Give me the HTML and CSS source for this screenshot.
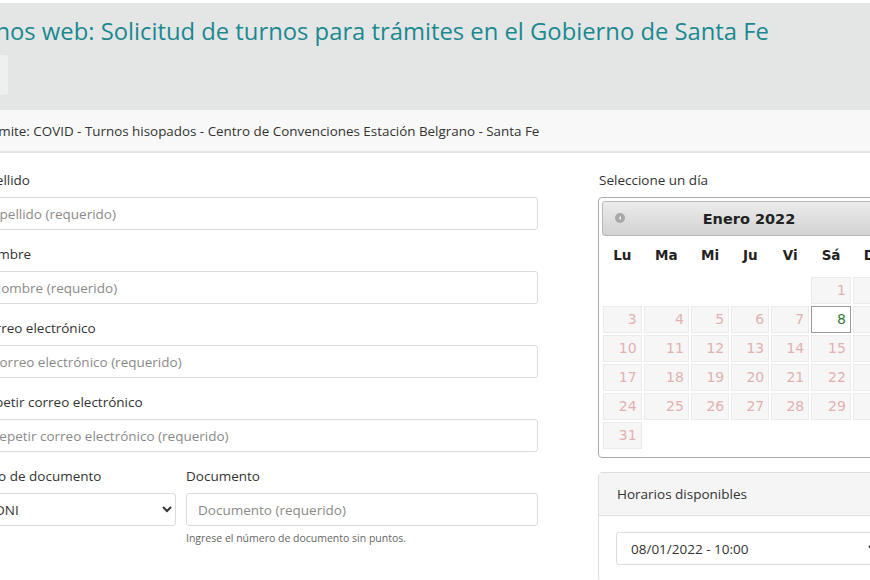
FILE: index.html
```html
<!DOCTYPE html>
<html lang="es">
<head>
<meta charset="utf-8">
<title>Turnos web</title>
<link rel="stylesheet" href="styles.css">
</head>
<body>
<div class="page">
  <header class="banner">
    <h1 class="title">Turnos web: Solicitud de turnos para trámites en el Gobierno de Santa Fe</h1>
    <div class="ghost-btn"></div>
  </header>
  <div class="crumb"><span>Trámite: COVID - Turnos hisopados - Centro de Convenciones Estación Belgrano - Santa Fe</span></div>
  <main class="content">
    <form class="form-col">
      <div class="group">
        <label class="lbl">Apellido</label>
        <input class="field" type="text" placeholder="Apellido (requerido)">
      </div>
      <div class="group">
        <label class="lbl">Nombre</label>
        <input class="field" type="text" placeholder="Nombre (requerido)">
      </div>
      <div class="group">
        <label class="lbl">Correo electrónico</label>
        <input class="field" type="text" placeholder="Correo electrónico (requerido)">
      </div>
      <div class="group">
        <label class="lbl">Repetir correo electrónico</label>
        <input class="field" type="text" placeholder="Repetir correo electrónico (requerido)">
      </div>
      <div class="group split">
        <div>
          <label class="lbl">Tipo de documento</label>
          <select class="field sel"><option>DNI</option></select>
        </div>
        <div>
          <label class="lbl">Documento</label>
          <input class="field" type="text" placeholder="Documento (requerido)">
          <p class="help">Ingrese el número de documento sin puntos.</p>
        </div>
      </div>
    </form>
    <aside class="side-col">
      <div class="lbl">Seleccione un día</div>
      <div class="cal">
        <div class="cal-head">
          <span class="prev"><svg width="10" height="10" viewBox="0 0 10 10"><circle cx="5" cy="5" r="5" fill="#a8a8a8"/><path d="M6 2.8 L3.6 5 L6 7.2 Z" fill="#e8e8e8"/></svg></span>
          <span class="month">Enero 2022</span>
        </div>
        <table class="grid">
          <thead>
            <tr><th>Lu</th><th>Ma</th><th>Mi</th><th>Ju</th><th>Vi</th><th>Sá</th><th>Do</th></tr>
          </thead>
          <tbody>
            <tr><td></td><td></td><td></td><td></td><td></td><td><span class="d">1</span></td><td><span class="d">2</span></td></tr>
            <tr><td><span class="d">3</span></td><td><span class="d">4</span></td><td><span class="d">5</span></td><td><span class="d">6</span></td><td><span class="d">7</span></td><td><span class="d sel-day">8</span></td><td><span class="d">9</span></td></tr>
            <tr><td><span class="d">10</span></td><td><span class="d">11</span></td><td><span class="d">12</span></td><td><span class="d">13</span></td><td><span class="d">14</span></td><td><span class="d">15</span></td><td><span class="d">16</span></td></tr>
            <tr><td><span class="d">17</span></td><td><span class="d">18</span></td><td><span class="d">19</span></td><td><span class="d">20</span></td><td><span class="d">21</span></td><td><span class="d">22</span></td><td><span class="d">23</span></td></tr>
            <tr><td><span class="d">24</span></td><td><span class="d">25</span></td><td><span class="d">26</span></td><td><span class="d">27</span></td><td><span class="d">28</span></td><td><span class="d">29</span></td><td><span class="d">30</span></td></tr>
            <tr><td><span class="d">31</span></td><td></td><td></td><td></td><td></td><td></td><td></td></tr>
          </tbody>
        </table>
      </div>
      <section class="panel">
        <div class="panel-head">Horarios disponibles</div>
        <div class="panel-body">
          <select class="field"><option>08/01/2022 - 10:00</option></select>
        </div>
      </section>
    </aside>
  </main>
</div>
</body>
</html>
```
FILE: styles.css
```css
html, body {
  margin: 0;
  padding: 0;
  background: #fff;
  overflow: hidden;
}
body {
  font-family: "Open Sans", "DejaVu Sans", sans-serif;
  color: #333;
  width: 870px;
  height: 580px;
}
.page {
  margin-left: -40px;
  width: 1000px;
}
.banner {
  margin-top: 3px;
  height: 107px;
  background: #e4e6e6;
  box-sizing: border-box;
  display: flex;
  flex-direction: column;
}
.title {
  margin: 11px 0 0 -2px;
  font-weight: 400;
  font-size: 23.8px;
  line-height: 34px;
  color: #1a8990;
}
.ghost-btn {
  margin-top: 7px;
  width: 48px;
  height: 40px;
  border-radius: 3px;
  background: #eef0f0;
}
.crumb {
  height: 41px;
  background: #f8f8f8;
  border-bottom: 2px solid #e4e4e4;
  display: flex;
  align-items: center;
  padding-left: 18px;
  font-size: 13.4px;
  color: #333;
}
.content {
  display: grid;
  grid-template-columns: 559px 302px;
  column-gap: 60px;
  padding: 17px 0 0 19px;
}
.lbl {
  display: block;
  font-size: 13.5px;
  line-height: 20px;
  margin-bottom: 7px;
  color: #333;
}
.group {
  margin-bottom: 14px;
}
.field {
  display: block;
  box-sizing: border-box;
  width: 100%;
  height: 33px;
  padding: 0 11px;
  border: 1px solid #dcdcdc;
  border-radius: 3px;
  font-family: inherit;
  font-size: 13.5px;
  color: #333;
  background: #fff;
}
.field::placeholder {
  color: #8a8a8a;
}
.split {
  display: grid;
  grid-template-columns: 197px 1fr;
  column-gap: 10px;
}
.help {
  margin: 4px 0 0 0;
  font-size: 10.5px;
  line-height: 16px;
  color: #666;
}
.side-col .lbl {
  margin-left: 1px;
}
.cal {
  border: 1px solid #aaa;
  border-radius: 4px;
  padding: 3px;
  height: 261px;
  box-sizing: border-box;
  font-family: "DejaVu Sans", Verdana, sans-serif;
}
.cal-head {
  position: relative;
  height: 35px;
  border: 1px solid #b8b8b8;
  border-radius: 3px;
  background: linear-gradient(#ececec, #d2d2d2);
  display: flex;
  align-items: center;
  justify-content: center;
  box-sizing: border-box;
}
.prev {
  position: absolute;
  left: 12px;
  top: 11px;
  line-height: 0;
}
.month {
  font-weight: 700;
  font-size: 14.5px;
  color: #222;
}
.grid {
  width: 100%;
  border-collapse: collapse;
  margin-top: 2px;
  font-size: 14px;
}
.grid th {
  font-weight: 700;
  font-size: 13.5px;
  height: 38px;
  padding: 0 4px 4px 4px;
  box-sizing: border-box;
  color: #222;
  text-align: center;
}
.grid td {
  padding: 1px;
  height: 27px;
}
.d {
  display: block;
  box-sizing: border-box;
  height: 27px;
  line-height: 25px;
  padding-right: 4px;
  text-align: right;
  background: #f6f6f6;
  border: 1px solid #ebebeb;
  color: #e3b0b0;
  font-size: 14px;
}
.d.sel-day {
  background: #fff;
  border: 1px solid #9a9a9a;
  color: #2f7d32;
}
.panel {
  margin-top: 14px;
  border: 1px solid #dedede;
  border-radius: 4px;
}
.panel-head {
  height: 42px;
  display: flex;
  align-items: center;
  padding-left: 18px;
  background: #f5f5f5;
  border-bottom: 1px solid #dedede;
  font-size: 13.5px;
}
.panel-body {
  padding: 16px 17px;
}
.panel-body .field {
  padding-left: 10px;
}
```
